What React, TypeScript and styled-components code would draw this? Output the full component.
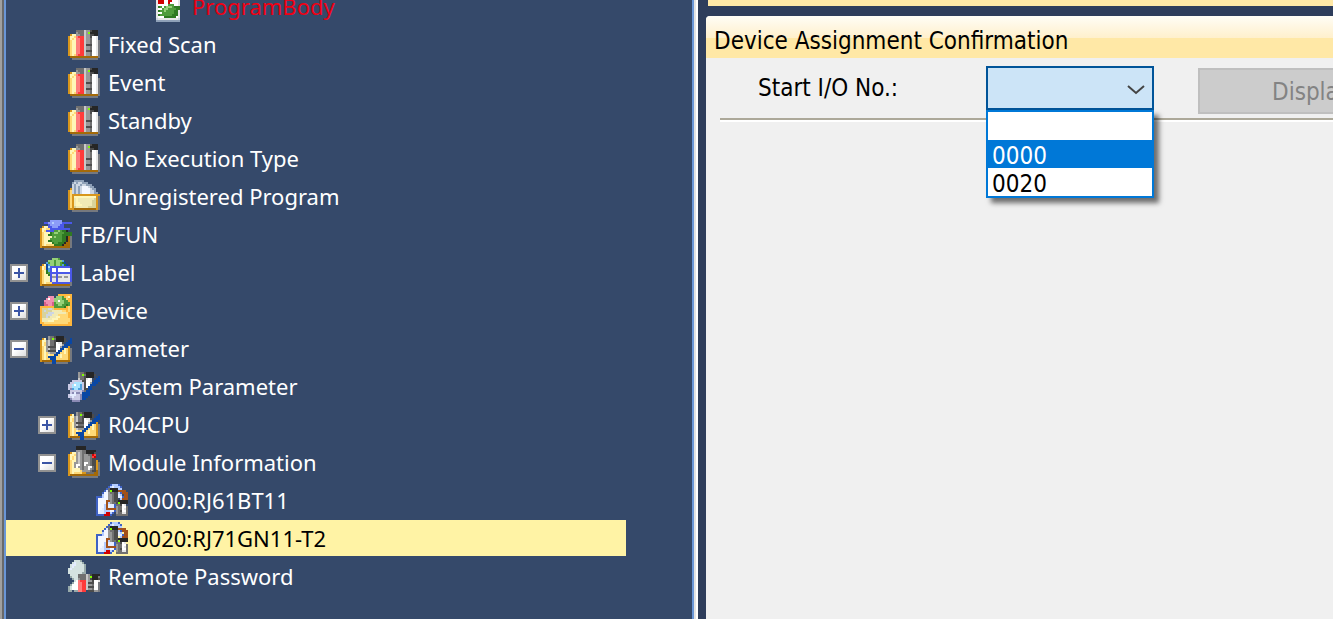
import React from "react";
import styled, { createGlobalStyle } from "styled-components";

const GlobalStyle = createGlobalStyle`
  * { box-sizing: border-box; }
  body { margin: 0; overflow: hidden; background: #2e3d5b; }
`;

const treeFont = `"Noto Sans", "Open Sans", sans-serif`;
const formFont = `"DejaVu Sans Condensed", "DejaVu Sans", sans-serif`;

/* ---------- pixel icons, 16 x 16 cells ---------- */

const palette: Record<string, string> = {
  Y: "#fff6b8", y: "#ffd977", o: "#d8961c", O: "#ffb73c", b: "#a46a08",
  s: "#76797f", k: "#262626", d: "#4c4c4c", g: "#707070", m: "#989898",
  l: "#c9c9c9", w: "#ffffff", e: "#e6e6e6", r: "#ff3a3a", R: "#d00000",
  p: "#ff7c7c", n: "#80ff00", B: "#4a58e8", c: "#8c9cf8", C: "#b4ccff",
  u: "#0a47a4", t: "#4fa2e0", T: "#a9e4ff", G: "#2f7a22", h: "#4f9c3c",
  H: "#96d078", v: "#f08fb0", V: "#d8608a", x: "#c9c9e4", X: "#8a8ab4",
  a: "#8fa1b8", A: "#cdd6e2", f: "#f1eab4", F: "#d8d39a", q: "#a3511a",
  z: "#d4e2e0", Z: "#98aaaa", D: "#e4ecff", W: "#f4f7ff", i: "#3f62c4",
};

const sprites: Record<string, string[]> = {
  books: [
    "................",
    "....gggglmmdkkk.",
    "....mggglmnkkkk.",
    ".oYYmmgglmmddkk.",
    "oYYyprrrlmmdwwe.",
    "oYyYpprrlmmgwwe.",
    "oyYYpprrlmmgwwes",
    "oyYYpprrlmmgwwes",
    "oyYYpprrldddwwes",
    "oyYYpprrlmmgwwes",
    "oyYYpprrlmmgwwes",
    "oyYYpprrldddwwes",
    "oyYYpprrlmmgwwes",
    "oyYyprrrlmmgwwes",
    ".bbbbbbbbbbbbbbs",
    "..sssssssssssss.",
  ],
  papers: [
    "...aaaaa........",
    "..aAaAAaaa......",
    "..AaAAaAAaaa....",
    "..AaAaAWWWAaa...",
    ".oAaAaAWWWWAaa..",
    "oyAaAaAWWWWAAa..",
    "oyAaAaAWWWWAAaa.",
    "oyoooooooooooooo",
    "oyoYYYYYYYYYYYos",
    "oyofYffffffffFos",
    "oyofYfffffffFFos",
    "oyofYYffffffFFos",
    "oyofYYYfffffFFos",
    "oyoFffffffFFFFos",
    "ooobbbbbbbbbbbos",
    "..sssssssssssss.",
  ],
  functions: [
    "................",
    ".....cccccc.....",
    "..BBccCccccBBBBB",
    "....BcccccBB....",
    ".oYYBBcccBBB....",
    "oYYyyBBBBBBBBBB.",
    "oYyBBBBhhHhGGk..",
    "oyYYYGhHHhhhGGGG",
    "oyYYGGhhhhhGGGGG",
    "oyYYYYhHhhhGGkbs",
    "oyYYYhhhhhhGGkbs",
    "oyYYGGhhhhhGGkbs",
    "oyYYYYGhhGGGkbbs",
    "oyYyyyyGGGGkbbbs",
    "obbbbbbbbbbbbbbs",
    "..sssssssssssss.",
  ],
  label: [
    "................",
    "......HHHh......",
    "....HHHhHHHt....",
    "...thHHhHHhGu...",
    ".oYutHHhHHhtGu..",
    "oYyuTBBBBBBBBBB.",
    "oYyutBwwBwwwwwwB",
    "oyYGtBwwBwwwwwwB",
    "oyYGhBBBBBBBBBBB",
    "oyYYGBeeBeeeeeeB",
    "oyYYYBmmBmmemmeB",
    "oyYYYBeeBeeeeeeB",
    "oyYYYBeeBeeeeeeB",
    "oyYyyyBBBBBBBBBs",
    "obbbbbbbbbbbbbbs",
    "..sssssssssssss.",
  ],
  device: [
    ".........OOOOOOO",
    "....vvv.HHHhOyYO",
    "...vwvvHHHHhhyOO",
    "..vvvvvHHwHHhhOO",
    "..VvvvVhHHHHhhhO",
    "..VVvvVhhHHhhGhO",
    "OOOOOOOhhhhhGOyO",
    "OFFFAAFOOOOOOOyO",
    "OFAFFFfffffyyOyO",
    "OFFFAAAffffffyOO",
    "OFFAAAfffyyyyyOO",
    "OFFAFfffYYyyyyOO",
    "OfffffYYYyyyyyyO",
    "OfffYYYyyyyyyyyO",
    "OOyyyyyyyyyyyyOO",
    ".OOOOOOOOOOOOOOO",
  ],
  parameter: [
    "................",
    "................",
    "....mggdkkkk....",
    ".oY.mgngkkkkd..u",
    "oYYmlggdkkkkd.uu",
    "oYymlggdweed.uuu",
    "oYymlggdwwemuuu.",
    "oyYmddddwwmuuuo.",
    "oyYmlgggwwuuYyos",
    "oyYmddddwuuyYyos",
    "oyYylmmmuuyyYyos",
    "oyYyYyyuuyYyyyos",
    "oyYyuuuuyyYyyyos",
    "oyYyyuuuyyyyyyos",
    "obbbbbuubbbbbbbs",
    "..ssssuussssss..",
  ],
  system: [
    "................",
    ".....mggdkkkk...",
    ".....mgngkkkkd..",
    ".....mggdkkkk..u",
    ".....lggdewe..uu",
    "..xxxxxddwwe.uuu",
    ".xxTTTTxdwwmuuu.",
    "xxTwTTtxdwwuuu..",
    "xxTTTTtxdwuu....",
    "xXtTTttxdduu....",
    ".xxxxxxXguu.....",
    ".xXDXXxuuuu.....",
    "xDDDxxXuuuu.....",
    "xxDxxxXuuu......",
    ".XxxxxXuu.......",
    "..XXXX..........",
  ],
  modules: [
    "....kkkkk.......",
    "....kkkkk.......",
    "....mmmggkkkkk..",
    ".oYYmlmggkkkkd..",
    "oYYymlmgmmggRr..",
    "oYyYmlmgmmmgrR..",
    "oYyYmlmgmmmgdd..",
    "oyYYmlmgmmmgddo.",
    "oyYmmlmgwwmgddos",
    "oyYmwwmgwmmgddos",
    "oyYmwmmgmmwwgdos",
    "oyYYYYmgmmwmgdos",
    "oyYYYYymmmmgddbs",
    "oyYyyyyooggggbbs",
    "obbbbbbbbbbbbbbs",
    "..sssssssssssss.",
  ],
  node: [
    ".......iCCCi....",
    "......iCDCCCi...",
    ".....igkkkkCC...",
    "....iDgnkkkqqqq.",
    "...iWWmggddCiqqq",
    "...CWWmmgddDC.qq",
    "iiiCWWmmgddDDiqq",
    "iWWWWWmmgdd.Cqqq",
    "iWWWWqqmgddkkkkk",
    "iWWWWqCmggdnkkkk",
    "iWWWCqDDDiggdwe.",
    "iWWWCqDDDimggwwg",
    "iWWDCqqqqqmggweg",
    "iWDDCCCWWimgdwwg",
    "iDDDCRRCi.mggeeg",
    "iiiiRRRi..gggggg",
  ],
  password: [
    "...zzzZ.........",
    "..zDzzzZ........",
    ".zDDzzzzZ.......",
    ".zDzzzzzZ.......",
    "zDzzzzzzZ.......",
    "zzzzzzzzZ.......",
    "zzzzzzzZZ.......",
    ".zzzzgggglmdkkkk",
    ".ZzzzgggglmnkkkK",
    "..Zzzmggglmdkkkd",
    "...zwprrrlmmdwwe",
    "..ZwwpprrldddwwK",
    ".ZwwwpprrlmmgwwK",
    "ZzwwwpprrldddwwK",
    "ZzwwwpprrlmmgwwK",
    "ZZ.ZZpprr.dddmmK",
  ],
  program: [
    "................",
    "................",
    "..eeeeeeeeeeee..",
    "..eRRRwRRRwwwe..",
    "..eRRRwRRRwwwe..",
    "..eRRRwwRRwwwe..",
    "..eRRRwwRwwwwe..",
    "..ewwwwwhhhwwe..",
    "..eGhwhHHHhGGG..",
    "..ewwhHHhhhhGG..",
    "..eGhhHhhhhGGe..",
    "..ewwhhhhhhGGe..",
    "..eGhhhhhhGGGe..",
    "..ewwwGGGGGGwe..",
    "..AeeeeeeeeeeA..",
    "..aaaaaaaaaaaa..",
  ],
};

const Picture = styled.svg`
  display: block;
  flex: none;
  width: 32px;
  height: 32px;
`;

function Sprite({ name }: { name: string }) {
  return (
    <Picture viewBox="0 0 16 16" shapeRendering="crispEdges" aria-hidden="true">
      {sprites[name].flatMap((line, y) =>
        line.split("").map((cell, x) =>
          cell === "." ? null : (
            <rect key={`${x}-${y}`} x={x} y={y} width="1" height="1" fill={palette[cell] ?? palette.s} />
          )
        )
      )}
    </Picture>
  );
}

/* ---------- layout ---------- */

const Page = styled.div`
  display: flex;
  gap: 8px;
  height: 100vh;
  background: #2e3d5b;
`;

const Sidebar = styled.nav`
  flex: 0 1 698px;
  min-width: 0;
  display: flex;
  border-left: 2px solid #a0a0a0;
  border-right: 2px solid #ffffff;
`;

const SidebarEdge = styled.div`
  flex: 1;
  min-width: 0;
  display: flex;
  border-left: 2px solid #696969;
  border-right: 2px solid #e3e3e3;
`;

const SidebarView = styled.div`
  flex: 1;
  min-width: 0;
  overflow: hidden;
  background: #35496a;
  border-left: 2px solid #6a96d6;
  border-right: 2px solid #6a96d6;
`;

const Tree = styled.ul`
  display: flex;
  flex-direction: column;
  gap: 2px;
  list-style: none;
  margin: -12px 66px 0 0;
  padding: 0;
`;

const Row = styled.li<{ $level: number; $selected?: boolean; $error?: boolean }>`
  display: flex;
  align-items: center;
  height: 36px;
  padding-left: ${(p) => 4 + p.$level * 28}px;
  background: ${(p) => (p.$selected ? "#fff3a5" : "transparent")};
  color: ${(p) => (p.$error ? "#f00014" : p.$selected ? "#000000" : "#ffffff")};
  font: 22px/36px ${treeFont};
  white-space: nowrap;
`;

const Slot = styled.span`
  flex: none;
  width: 30px;
  padding-top: 2px;
`;

const Expander = styled.button`
  display: block;
  width: 18px;
  height: 18px;
  padding: 0;
  border: 2px solid #919191;
  background: linear-gradient(135deg, #ffffff 40%, #dedede);
`;

const Mark = styled.svg`
  display: block;
  width: 14px;
  height: 14px;
`;

const Caption = styled.span`
  margin-left: 8px;
`;

const Content = styled.main`
  flex: 1;
  min-width: 0;
  display: flex;
  flex-direction: column;
  overflow: hidden;
`;

const UpperPane = styled.div`
  height: 6px;
  margin: 0 0 10px 2px;
  background: #ffe8a6;
`;

const Panel = styled.section`
  flex: 1;
  background: #f0f0f0;
  border-top-left-radius: 4px;
  overflow: hidden;
`;

const PanelTitle = styled.h1`
  margin: 0;
  padding: 4px 8px 0;
  height: 42px;
  background: linear-gradient(#fffdf6, #fff0cc 22px, #ffe8a6 22px);
  color: #000000;
  font: 24px/42px ${formFont};
  white-space: nowrap;
`;

const Toolbar = styled.div`
  display: flex;
  align-items: flex-start;
  height: 62px;
  margin: 0 0 0 14px;
  padding: 8px 0 0 38px;
  border-bottom: 2px solid #aca899;
  box-shadow: 0 2px #ffffff;
`;

const FieldLabel = styled.label`
  flex: none;
  width: 228px;
  color: #000000;
  font: 24px/44px ${formFont};
  white-space: nowrap;
`;

const Combo = styled.div`
  position: relative;
  flex: none;
  width: 168px;
  margin-right: 44px;
`;

const Select = styled.select`
  appearance: none;
  display: block;
  width: 100%;
  height: 44px;
  padding: 0 4px;
  border: 2px solid #005499;
  border-radius: 0;
  outline: none;
  background: #cce4f7;
  font: 24px/28px ${formFont};
`;

const Chevron = styled.svg`
  position: absolute;
  top: 18px;
  right: 9px;
  width: 18px;
  height: 12px;
  pointer-events: none;
`;

const Menu = styled.ul`
  position: absolute;
  z-index: 1;
  top: 100%;
  left: 0;
  right: 0;
  list-style: none;
  margin: 0;
  padding: 0;
  border: 2px solid #0078d7;
  background: #ffffff;
  box-shadow: 5px 5px 5px rgba(0, 0, 0, 0.55);
`;

const Option = styled.li<{ $active?: boolean }>`
  height: 28px;
  padding: 2px 4px 0;
  background: ${(p) => (p.$active ? "#0078d7" : "#ffffff")};
  color: ${(p) => (p.$active ? "#ffffff" : "#000000")};
  font: 24px/28px ${formFont};
`;

const DisplayButton = styled.button`
  flex: none;
  height: 46px;
  margin-top: 2px;
  padding: 2px 72px 0;
  border: 2px solid #bfbfbf;
  background: #cccccc;
  color: #838383;
  font: 24px/40px ${formFont};
`;

type Item = {
  text: string;
  level: number;
  icon: string;
  toggle?: "plus" | "minus";
  selected?: boolean;
  error?: boolean;
};

const items: Item[] = [
  { text: "ProgramBody", level: 4, icon: "program", error: true },
  { text: "Fixed Scan", level: 1, icon: "books" },
  { text: "Event", level: 1, icon: "books" },
  { text: "Standby", level: 1, icon: "books" },
  { text: "No Execution Type", level: 1, icon: "books" },
  { text: "Unregistered Program", level: 1, icon: "papers" },
  { text: "FB/FUN", level: 0, icon: "functions" },
  { text: "Label", level: 0, icon: "label", toggle: "plus" },
  { text: "Device", level: 0, icon: "device", toggle: "plus" },
  { text: "Parameter", level: 0, icon: "parameter", toggle: "minus" },
  { text: "System Parameter", level: 1, icon: "system" },
  { text: "R04CPU", level: 1, icon: "parameter", toggle: "plus" },
  { text: "Module Information", level: 1, icon: "modules", toggle: "minus" },
  { text: "0000:RJ61BT11", level: 2, icon: "node" },
  { text: "0020:RJ71GN11-T2", level: 2, icon: "node", selected: true },
  { text: "Remote Password", level: 1, icon: "password" },
];

export default function App() {
  return (
    <Page>
      <GlobalStyle />
      <Sidebar aria-label="Project">
        <SidebarEdge>
          <SidebarView>
            <Tree role="tree">
              {items.map((item) => (
                <Row
                  key={item.text}
                  role="treeitem"
                  aria-level={item.level + 1}
                  aria-selected={!!item.selected}
                  $level={item.level}
                  $selected={item.selected}
                  $error={item.error}
                >
                  <Slot>
                    {item.toggle && (
                      <Expander aria-label={item.toggle === "plus" ? "Expand" : "Collapse"}>
                        <Mark viewBox="0 0 14 14" shapeRendering="crispEdges">
                          <path
                            d={item.toggle === "plus" ? "M2 6h10v2H2zM6 2h2v10H6z" : "M2 6h10v2H2z"}
                            fill="#3b55a5"
                          />
                        </Mark>
                      </Expander>
                    )}
                  </Slot>
                  <Sprite name={item.icon} />
                  <Caption>{item.text}</Caption>
                </Row>
              ))}
            </Tree>
          </SidebarView>
        </SidebarEdge>
      </Sidebar>
      <Content>
        <UpperPane />
        <Panel>
          <PanelTitle>Device Assignment Confirmation</PanelTitle>
          <Toolbar>
            <FieldLabel htmlFor="start-io">Start I/O No.:</FieldLabel>
            <Combo>
              <Select id="start-io" defaultValue="">
                <option value=""></option>
                <option value="0000">0000</option>
                <option value="0020">0020</option>
              </Select>
              <Chevron viewBox="0 0 18 12" aria-hidden="true">
                <path d="M1 2l8 7 8-7" fill="none" stroke="#444444" strokeWidth="2" />
              </Chevron>
              <Menu role="listbox">
                <Option role="option" aria-label="None" />
                <Option role="option" $active>0000</Option>
                <Option role="option">0020</Option>
              </Menu>
            </Combo>
            <DisplayButton disabled>Display</DisplayButton>
          </Toolbar>
        </Panel>
      </Content>
    </Page>
  );
}
